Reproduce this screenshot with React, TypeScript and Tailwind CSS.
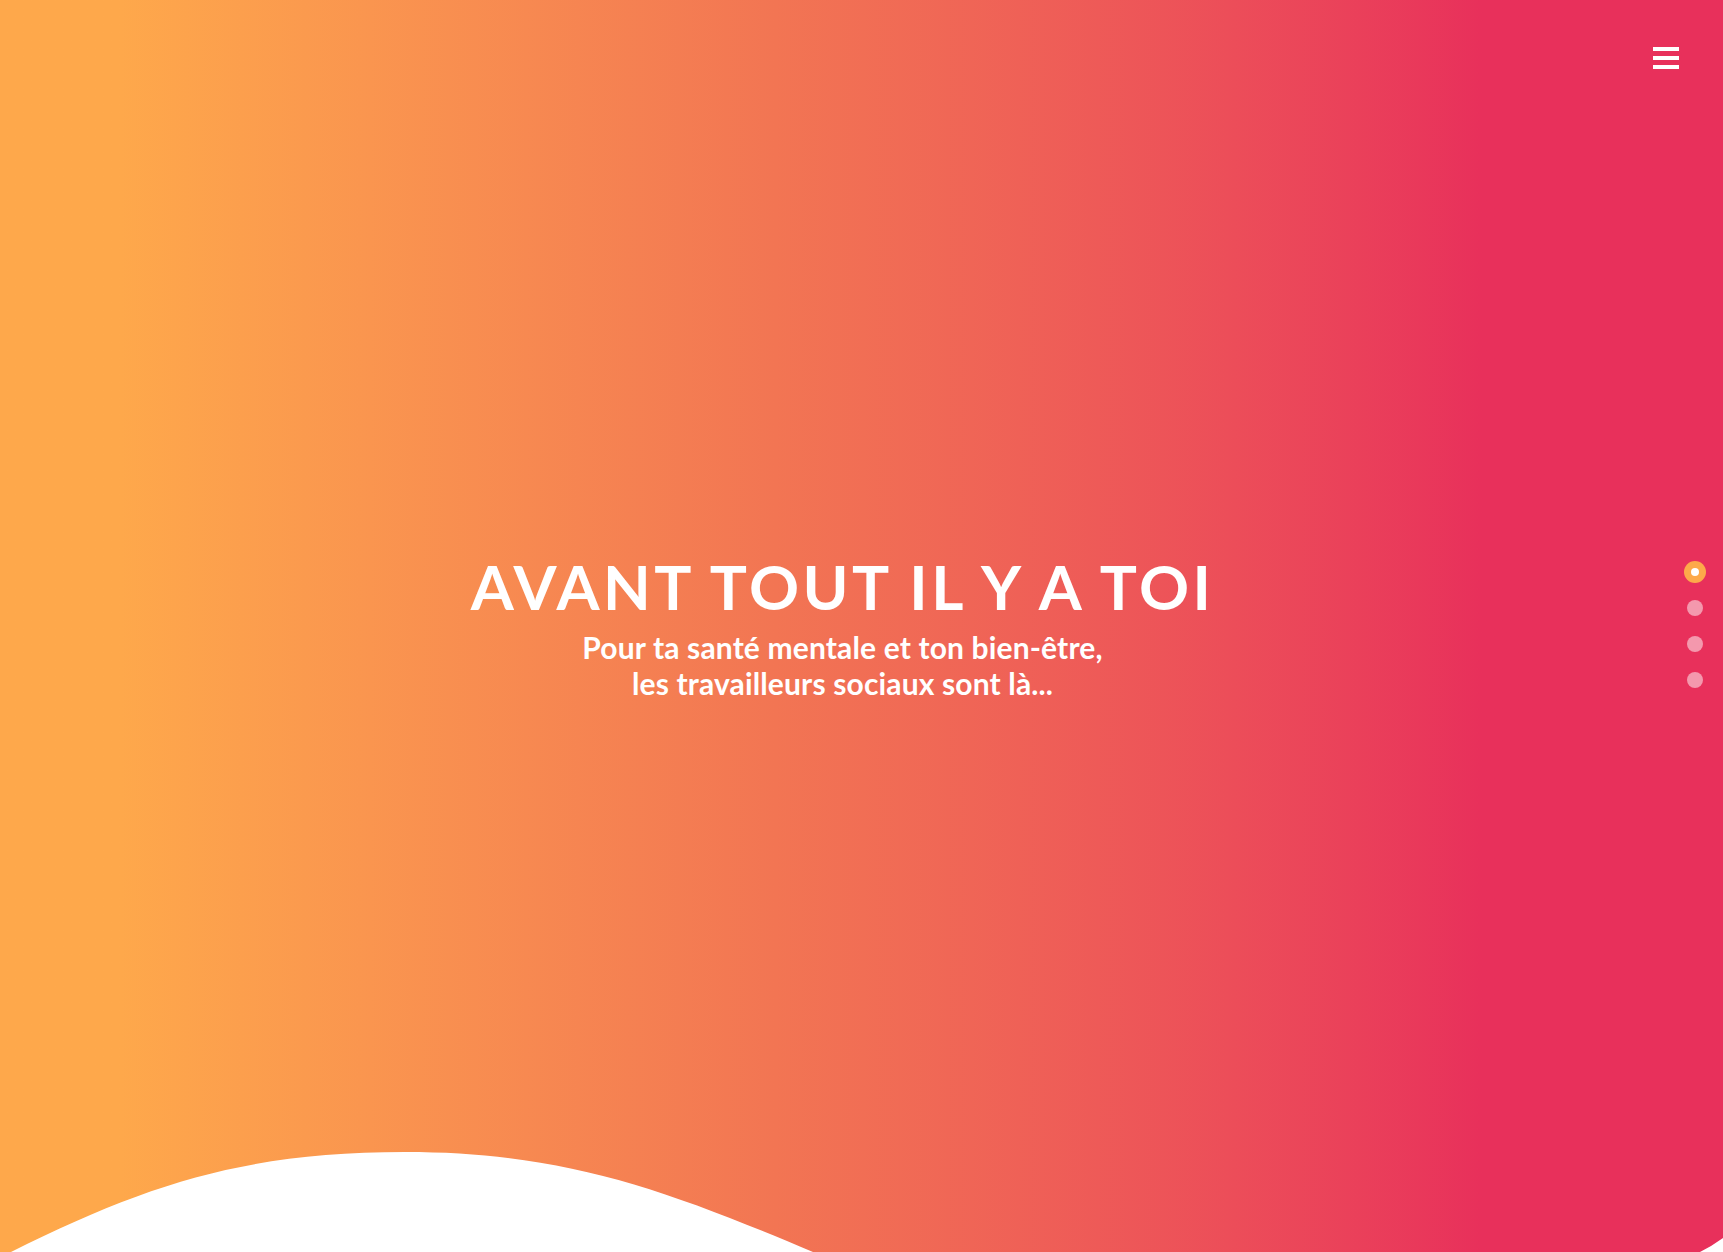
const SLIDES = [0, 1, 2, 3];

export default function App() {
  const active = 0;

  return (
    <div className="relative h-[1252px] w-full overflow-hidden bg-linear-to-r from-[#fea84b] from-[7%] via-[#f27553] via-[45%] to-[#e8305b] to-[86%] font-['Lato',sans-serif] text-white">
      {/* Menu button */}
      <button className="absolute right-[44px] top-[47px] flex flex-col gap-[5px]" aria-label="Menu">
        <span className="block h-[4px] w-[26px] bg-white" />
        <span className="block h-[4px] w-[26px] bg-white" />
        <span className="block h-[4px] w-[26px] bg-white" />
      </button>

      {/* Hero */}
      <div className="flex h-full flex-col items-center justify-center pr-[38px] pt-[3px]">
        <h1 className="text-[62px] font-bold leading-none tracking-[0.056em]">
          AVANT TOUT IL Y A TOI
        </h1>
        <p className="mt-[12px] text-center text-[30px] font-bold leading-[36px] tracking-[0.005em]">
          Pour ta santé mentale et ton bien-être,
          <br />
          les travailleurs sociaux sont là...
        </p>
      </div>

      {/* Slide dots */}
      <div className="absolute right-[17px] top-[561px] flex flex-col items-center gap-[14px]">
        {SLIDES.map((i) => (
          <span key={i} className="flex h-[22px] w-[22px] items-center justify-center">
            {i === active ? (
              <span className="flex h-[22px] w-[22px] items-center justify-center rounded-full bg-[#fda94a]">
                <span className="h-[8px] w-[8px] rounded-full bg-white" />
              </span>
            ) : (
              <span className="h-[16px] w-[16px] rounded-full bg-white/50" />
            )}
          </span>
        ))}
      </div>

      {/* Bottom wave */}
      <svg
        className="absolute bottom-0 left-0 h-[100px] w-full"
        viewBox="0 0 1723 100"
        preserveAspectRatio="none"
      >
        <path
          d="M0,100 L11,100 C150,30 250,0 405,0 C560,0 660,35 813,100 L1700,100 Q1712,94 1723,86 L1723,100 Z"
          fill="#ffffff"
        />
      </svg>
    </div>
  );
}
